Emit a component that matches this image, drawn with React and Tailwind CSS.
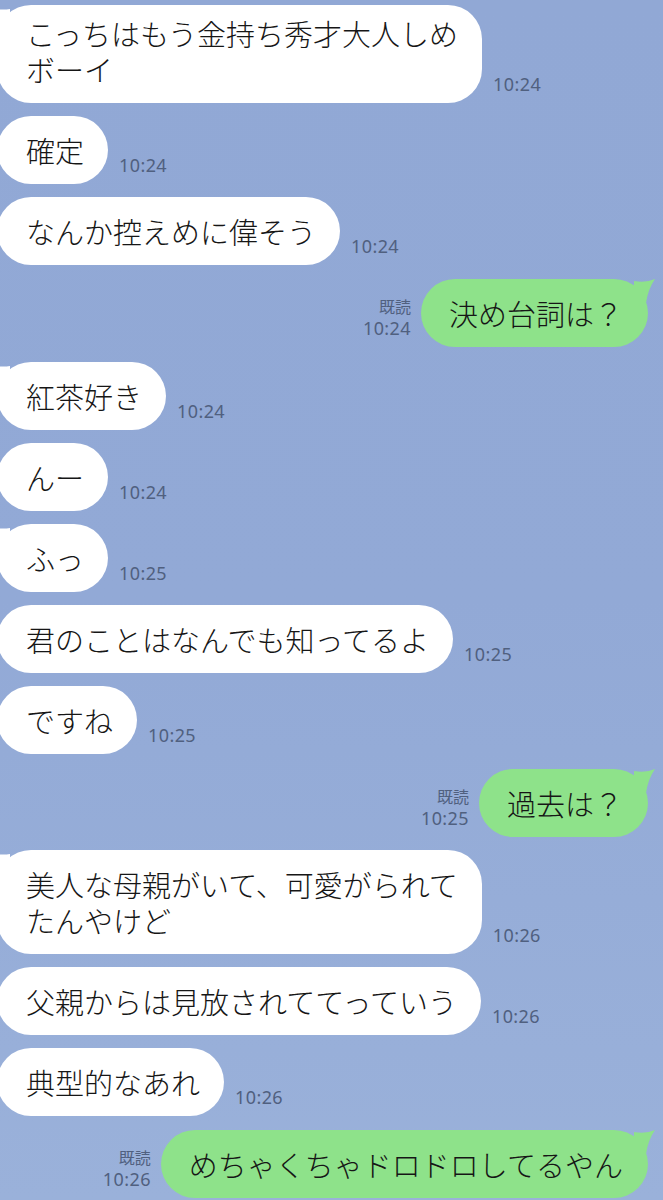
import React from "react";

const msgs = [
  { side: "l", lines: ["こっちはもう金持ち秀才大人しめ", "ボーイ"], time: "10:24", tail: true, mt: "mt-[5px]", first: true },
  { side: "l", lines: ["確定"], time: "10:24", mt: "mt-[13px]" },
  { side: "l", lines: ["なんか控えめに偉そう"], time: "10:24", mt: "mt-[13px]" },
  { side: "r", lines: ["決め台詞は？"], time: "10:24", tail: true, mt: "mt-[14px]" },
  { side: "l", lines: ["紅茶好き"], time: "10:24", tail: true, mt: "mt-[15px]" },
  { side: "l", lines: ["んー"], time: "10:24", mt: "mt-[13px]" },
  { side: "l", lines: ["ふっ"], time: "10:25", tail: true, mt: "mt-[13px]" },
  { side: "l", lines: ["君のことはなんでも知ってるよ"], time: "10:25", mt: "mt-[13px]" },
  { side: "l", lines: ["ですね"], time: "10:25", mt: "mt-[13px]" },
  { side: "r", lines: ["過去は？"], time: "10:25", tail: true, mt: "mt-[15px]" },
  { side: "l", lines: ["美人な母親がいて、可愛がられて", "たんやけど"], time: "10:26", tail: true, mt: "mt-[13px]" },
  { side: "l", lines: ["父親からは見放されててっていう"], time: "10:26", mt: "mt-[13px]" },
  { side: "l", lines: ["典型的なあれ"], time: "10:26", mt: "mt-[13px]" },
  { side: "r", lines: ["めちゃくちゃドロドロしてるやん"], time: "10:26", tail: true, mt: "mt-[14px]" },
];

const font = { fontFamily: '"Noto Sans CJK JP", "Noto Sans", sans-serif' };

function Lines({ lines }) {
  return lines.map((l, i) => (
    <div key={i} className="relative h-[36px]">
      {l}
    </div>
  ));
}

function Received({ m }) {
  return (
    <div className={`flex items-end ${m.mt}`}>
      <div
        className={`relative ml-[-3px] bg-white rounded-[34px] pl-[29px] pr-[24px] ${m.first ? "pt-[10px]" : "pt-[16px]"} pb-[16px] text-[29px] leading-[36px] font-light text-[#161616] whitespace-nowrap`}
      >
        {m.tail && (
          <svg className="absolute left-[-9px] top-[0px]" width="22" height="26" viewBox="0 0 22 26">
            <path d="M22 4 Q10 6 1 1 Q8 12 10 26 L22 26 Z" fill="#ffffff" />
          </svg>
        )}
        <Lines lines={m.lines} />
      </div>
      <div className="ml-[11px] pb-[9px] text-[18px] leading-[20px] tracking-[0.4px] text-[#50607f]" style={{ fontFamily: '"Noto Sans", sans-serif' }}>
        {m.time}
      </div>
    </div>
  );
}

function Sent({ m }) {
  return (
    <div className={`flex items-end justify-end pr-[15px] ${m.mt}`}>
      <div className="mr-[10px] pb-[9px] flex flex-col items-end text-[#50607f]">
        <div className="text-[16px] leading-[23px]">既読</div>
        <div className="text-[18px] leading-[20px] tracking-[0.4px]" style={{ fontFamily: '"Noto Sans", sans-serif' }}>
          {m.time}
        </div>
      </div>
      <div className="relative bg-[#8ee28a] rounded-[34px] pl-[28px] pr-[25px] py-[16px] text-[29px] leading-[36px] font-light text-[#161616] whitespace-nowrap">
        {m.tail && (
          <svg className="absolute right-[-8px] top-[-2px]" width="22" height="26" viewBox="0 0 22 26">
            <path d="M0 4 Q12 6 21 2 Q14 12 12 26 L0 26 Z" fill="#8ee28a" />
          </svg>
        )}
        <Lines lines={m.lines} />
      </div>
    </div>
  );
}

export default function App() {
  return (
    <div
      className="w-[663px] h-[1200px] overflow-hidden bg-gradient-to-b from-[#91a8d5] via-[#92a9d6] to-[#9ab1da] flex flex-col"
      style={font}
    >
      {msgs.map((m, i) => (m.side === "l" ? <Received key={i} m={m} /> : <Sent key={i} m={m} />))}
    </div>
  );
}
